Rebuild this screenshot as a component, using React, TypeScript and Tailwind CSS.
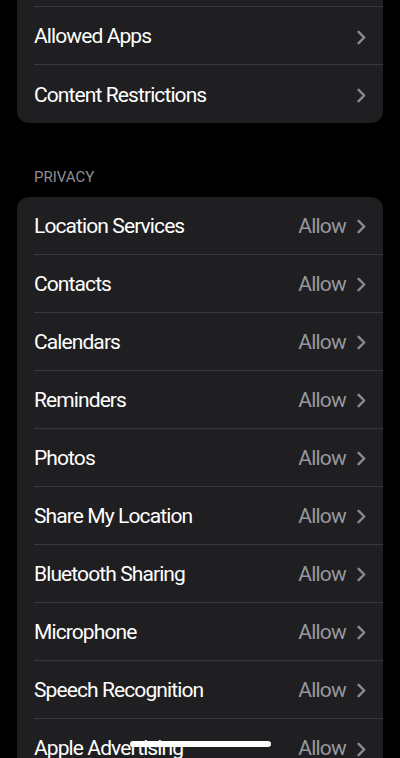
const privacyRows = [
  "Location Services",
  "Contacts",
  "Calendars",
  "Reminders",
  "Photos",
  "Share My Location",
  "Bluetooth Sharing",
  "Microphone",
  "Speech Recognition",
  "Apple Advertising",
];

function Chevron() {
  return (
    <svg width="9" height="15" viewBox="0 0 9 15" className="shrink-0">
      <polyline
        points="1.6,1.8 7.2,7.5 1.6,13.2"
        fill="none"
        stroke="#8a8a8f"
        strokeWidth="2.4"
        strokeLinecap="round"
        strokeLinejoin="round"
      />
    </svg>
  );
}

function Row({ label, value, last }: { label: string; value?: string; last?: boolean }) {
  return (
    <div className="flex h-[58px] items-center pl-[17px]">
      <div
        className={`flex h-full flex-1 items-center pr-[17px] pt-[3px] ${last ? "" : "border-b border-[#38383a]"}`}
      >
        <span className="flex-1 text-[21px] tracking-[-0.9px] text-white">{label}</span>
        {value && <span className="mr-[11px] text-[21px] tracking-[-0.8px] text-[#98989f]">{value}</span>}
        <Chevron />
      </div>
    </div>
  );
}

export default function App() {
  return (
    <div className="relative h-[758px] overflow-hidden bg-black font-['Roboto',sans-serif]">
      <div className="mx-[17px] -mt-[51px] overflow-hidden rounded-[12px] bg-[#1f1f21]">
        <Row label="iTunes & App Store Purchases" />
        <Row label="Allowed Apps" />
        <Row label="Content Restrictions" last />
      </div>

      <p className="mt-[43px] mb-[8px] pl-[34px] text-[15px] uppercase text-[#8e8e93]">Privacy</p>

      <div className="mx-[17px] overflow-hidden rounded-[12px] bg-[#1f1f21]">
        {privacyRows.map((r, i) => (
          <Row key={r} label={r} value="Allow" last={i === privacyRows.length - 1} />
        ))}
      </div>

      <div className="absolute bottom-[11px] left-[130px] h-[6px] w-[141px] rounded-full bg-white" />
    </div>
  );
}
